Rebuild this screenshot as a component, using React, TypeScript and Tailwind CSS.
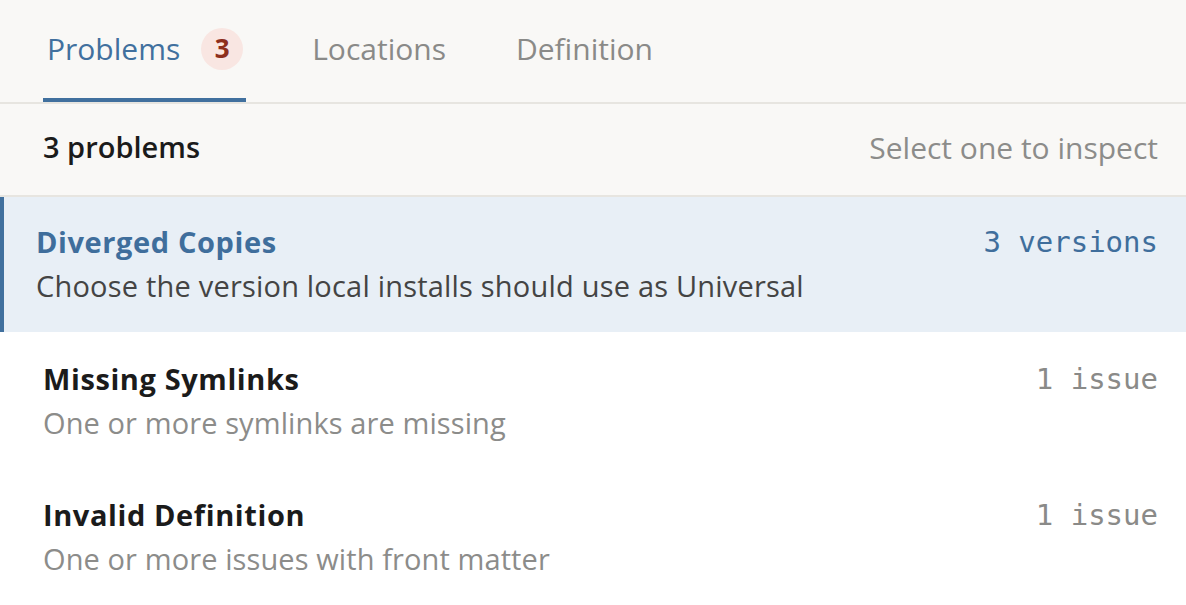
const font = { fontFamily: '"Open Sans", Lato, sans-serif' };

const problems = [
  {
    title: 'Diverged Copies',
    desc: 'Choose the version local installs should use as Universal',
    meta: '3 versions',
    selected: true,
  },
  {
    title: 'Missing Symlinks',
    desc: 'One or more symlinks are missing',
    meta: '1 issue',
    selected: false,
  },
  {
    title: 'Invalid Definition',
    desc: 'One or more issues with front matter',
    meta: '1 issue',
    selected: false,
  },
];

export default function App() {
  return (
    <div className="min-h-screen w-[1186px] bg-white" style={font}>
      {/* Tabs */}
      <nav className="flex h-[104px] items-stretch gap-[66px] border-b-2 border-[#e7e5e0] bg-[#f9f8f6] pl-[43px]">
        <div className="flex items-center gap-[21px] border-b-4 border-[#41709e] pl-[4px] pr-[3px] pb-[1px]">
          <span className="text-[30px] text-[#41709e]">Problems</span>
          <span className="flex h-[42px] w-[42px] items-center justify-center rounded-full bg-[#f9e6e2] text-[26px] font-bold text-[#8e2f1d]">
            3
          </span>
        </div>
        <div className="flex items-center pb-[5px] text-[30px] text-[#8a8a88]">Locations</div>
        <div className="ml-[4px] flex items-center pb-[5px] text-[30px] text-[#8a8a88]">Definition</div>
      </nav>

      {/* Summary */}
      <div className="flex h-[93px] items-center justify-between border-b-2 border-[#e7e5e0] bg-[#f9f8f6] pb-[5px] pl-[43px] pr-[28px]">
        <span className="text-[29px] font-semibold text-[#1b1b1b]">3 problems</span>
        <span className="text-[30px] text-[#8c8c8a]">Select one to inspect</span>
      </div>

      {/* List */}
      <ul>
        {problems.map((p) => (
          <li
            key={p.title}
            className={
              p.selected
                ? 'flex h-[135px] justify-between border-l-4 border-[#41709e] bg-[#e8eff6] pl-[32px] pr-[28px] pt-[27px]'
                : 'flex h-[136px] justify-between pl-[43px] pr-[28px] pt-[29px]'
            }
          >
            <div className="flex flex-col gap-[8px]">
              <span
                className={
                  p.selected
                    ? 'text-[29px] font-bold leading-[36px] tracking-[0.6px] text-[#3f6e9c]'
                    : 'text-[29px] font-bold leading-[36px] tracking-[0.6px] text-[#1b1b1b]'
                }
              >
                {p.title}
              </span>
              <span
                className={
                  p.selected
                    ? 'text-[29px] leading-[36px] tracking-[0.2px] text-[#444444]'
                    : 'text-[29px] leading-[36px] tracking-[0.1px] text-[#8c8c8a]'
                }
              >
                {p.desc}
              </span>
            </div>
            <span
              className={
                p.selected
                  ? 'text-[29px] leading-[36px] text-[#3f6e9c]'
                  : 'text-[29px] leading-[36px] text-[#8a8a88]'
              }
              style={{ fontFamily: '"DejaVu Sans Mono", monospace' }}
            >
              {p.meta}
            </span>
          </li>
        ))}
      </ul>
    </div>
  );
}
